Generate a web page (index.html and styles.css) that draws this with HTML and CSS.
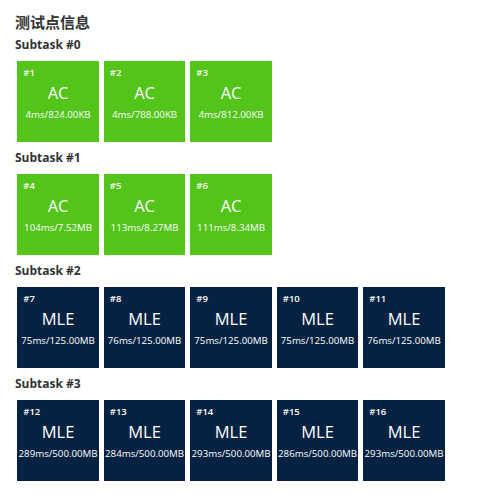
FILE: index.html
```html
<!DOCTYPE html>
<html lang="zh-CN">
<head>
<meta charset="utf-8">
<title>测试点信息</title>
<link rel="stylesheet" href="styles.css">
</head>
<body>
<div class="page">
  <h2 class="title">测试点信息</h2>

  <div class="subtask">
    <h3 class="subtask-name">Subtask #0</h3>
    <div class="cases">
      <div class="case ac"><div class="case-id">#1</div><div class="case-status">AC</div><div class="case-info">4ms/824.00KB</div></div>
      <div class="case ac"><div class="case-id">#2</div><div class="case-status">AC</div><div class="case-info">4ms/788.00KB</div></div>
      <div class="case ac"><div class="case-id">#3</div><div class="case-status">AC</div><div class="case-info">4ms/812.00KB</div></div>
    </div>
  </div>

  <div class="subtask">
    <h3 class="subtask-name">Subtask #1</h3>
    <div class="cases">
      <div class="case ac"><div class="case-id">#4</div><div class="case-status">AC</div><div class="case-info">104ms/7.52MB</div></div>
      <div class="case ac"><div class="case-id">#5</div><div class="case-status">AC</div><div class="case-info">113ms/8.27MB</div></div>
      <div class="case ac"><div class="case-id">#6</div><div class="case-status">AC</div><div class="case-info">111ms/8.34MB</div></div>
    </div>
  </div>

  <div class="subtask">
    <h3 class="subtask-name">Subtask #2</h3>
    <div class="cases">
      <div class="case mle"><div class="case-id">#7</div><div class="case-status">MLE</div><div class="case-info">75ms/125.00MB</div></div>
      <div class="case mle"><div class="case-id">#8</div><div class="case-status">MLE</div><div class="case-info">76ms/125.00MB</div></div>
      <div class="case mle"><div class="case-id">#9</div><div class="case-status">MLE</div><div class="case-info">75ms/125.00MB</div></div>
      <div class="case mle"><div class="case-id">#10</div><div class="case-status">MLE</div><div class="case-info">75ms/125.00MB</div></div>
      <div class="case mle"><div class="case-id">#11</div><div class="case-status">MLE</div><div class="case-info">76ms/125.00MB</div></div>
    </div>
  </div>

  <div class="subtask">
    <h3 class="subtask-name">Subtask #3</h3>
    <div class="cases">
      <div class="case mle"><div class="case-id">#12</div><div class="case-status">MLE</div><div class="case-info">289ms/500.00MB</div></div>
      <div class="case mle"><div class="case-id">#13</div><div class="case-status">MLE</div><div class="case-info">284ms/500.00MB</div></div>
      <div class="case mle"><div class="case-id">#14</div><div class="case-status">MLE</div><div class="case-info">293ms/500.00MB</div></div>
      <div class="case mle"><div class="case-id">#15</div><div class="case-status">MLE</div><div class="case-info">286ms/500.00MB</div></div>
      <div class="case mle"><div class="case-id">#16</div><div class="case-status">MLE</div><div class="case-info">293ms/500.00MB</div></div>
    </div>
  </div>
</div>
</body>
</html>
```

FILE: styles.css
```css
html, body {
  margin: 0;
  padding: 0;
  background: #ffffff;
}

body {
  font-family: "Open Sans", "Noto Sans CJK SC", sans-serif;
  color: #333333;
}

.page {
  padding: 10.7px 0 0 15px;
}

.title {
  margin: 0;
  font-family: "Open Sans", "Noto Sans CJK SC", sans-serif;
  font-size: 15px;
  line-height: 22px;
  font-weight: 700;
}

.subtask-name {
  margin: 4.3px 0 0 0;
  font-size: 12px;
  line-height: 16px;
  font-weight: 700;
}

.subtask + .subtask .subtask-name {
  margin-top: 7.5px;
}

.cases {
  display: flex;
  gap: 5px;
  margin: 8px 0 0 2.3px;
}

.case {
  width: 81.5px;
  height: 81.5px;
  box-sizing: border-box;
  color: #ffffff;
  display: flex;
  flex-direction: column;
}

.case.ac {
  background: #52c41a;
}

.case.mle {
  background: #052242;
}

.case-id {
  margin: 6.5px 0 0 6px;
  font-size: 9.5px;
  line-height: 12px;
  font-weight: 600;
}

.case-status {
  margin-top: 2.5px;
  text-align: center;
  font-size: 16.5px;
  line-height: 22px;
}

.case-info {
  margin-top: 5.5px;
  text-align: center;
  font-size: 9.7px;
  line-height: 12px;
  white-space: nowrap;
}
```
